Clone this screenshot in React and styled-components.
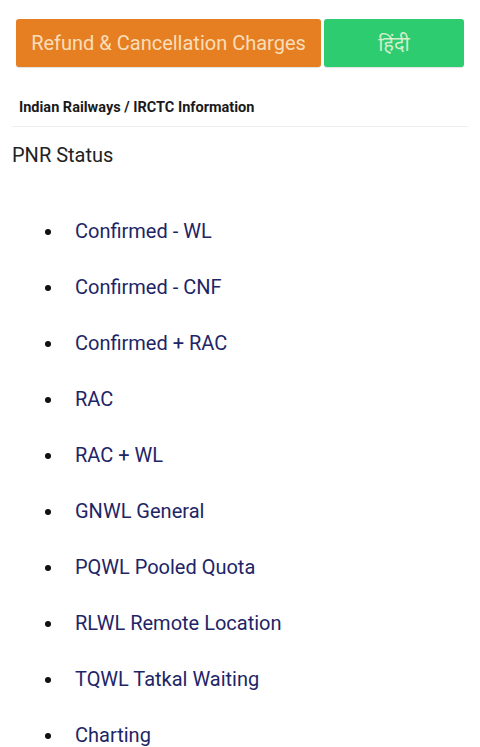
import styled, { createGlobalStyle } from "styled-components"

const items = [
    "Confirmed - WL",
    "Confirmed - CNF",
    "Confirmed + RAC",
    "RAC",
    "RAC + WL",
    "GNWL General",
    "PQWL Pooled Quota",
    "RLWL Remote Location",
    "TQWL Tatkal Waiting",
    "Charting",
]

export default function App(){
    return(
        <>
            <GlobalStyle />
            <SCPage>
                <SCButtons>
                    <SCButton $bg="#E67E22" $grow={305}>Refund &amp; Cancellation Charges</SCButton>
                    <SCButton $bg="#2ECC71" $grow={140}>हिंदी</SCButton>
                </SCButtons>
                <SCCrumb>Indian Railways / IRCTC Information</SCCrumb>
                <SCTitle>PNR Status</SCTitle>
                <SCList>
                    {items.map((t) => (
                        <li key={t}><a href="#">{t}</a></li>
                    ))}
                </SCList>
            </SCPage>
        </>
    );
}

const GlobalStyle = createGlobalStyle`
    body{
        margin: 0;
        background: #FFFFFF;
        font-family: Roboto, "Noto Sans", sans-serif;
    }
`

const SCPage = styled.div`
    width: 480px;
    height: 747px;
    overflow: hidden;
    padding: 19px 12px 0 12px;
    box-sizing: border-box;
`

const SCButtons = styled.div`
    display: flex;
    gap: 3px;
    padding: 0 4px;
`

const SCButton = styled.div`
    flex: 0 0 ${(p) => p.$grow}px;
    height: 48px;
    display: flex;
    align-items: center;
    justify-content: center;

    background: ${(p) => p.$bg};
    border-radius: 3px;
    box-shadow: 0 1px 1px rgba(0, 0, 0, 0.12);

    font-size: 20px;
    color: rgba(255, 248, 225, 0.8);
    font-family: Roboto, "Noto Sans", sans-serif;
`

const SCCrumb = styled.div`
    margin-top: 32px;
    padding: 0 7px 10px 7px;
    border-bottom: 1px solid #EEEEEE;

    font-weight: 700;
    font-size: 14.5px;
    line-height: 17px;
    color: #1A1A1A;
`

const SCTitle = styled.p`
    margin: 16px 0 0 0;
    font-size: 20px;
    line-height: 24px;
    color: #222222;
`

const SCList = styled.ul`
    margin: 52px 0 0 0;
    padding: 0 0 0 63px;
    list-style: none;

    li{
        position: relative;
        height: 56px;
        line-height: 24px;
        font-size: 20px;
    }

    li::before{
        content: "";
        position: absolute;
        left: -30px;
        top: 10px;
        width: 6px;
        height: 6px;
        border-radius: 50%;
        background: #111111;
    }

    a{
        color: #1E2566;
        text-decoration: none;
    }
`
